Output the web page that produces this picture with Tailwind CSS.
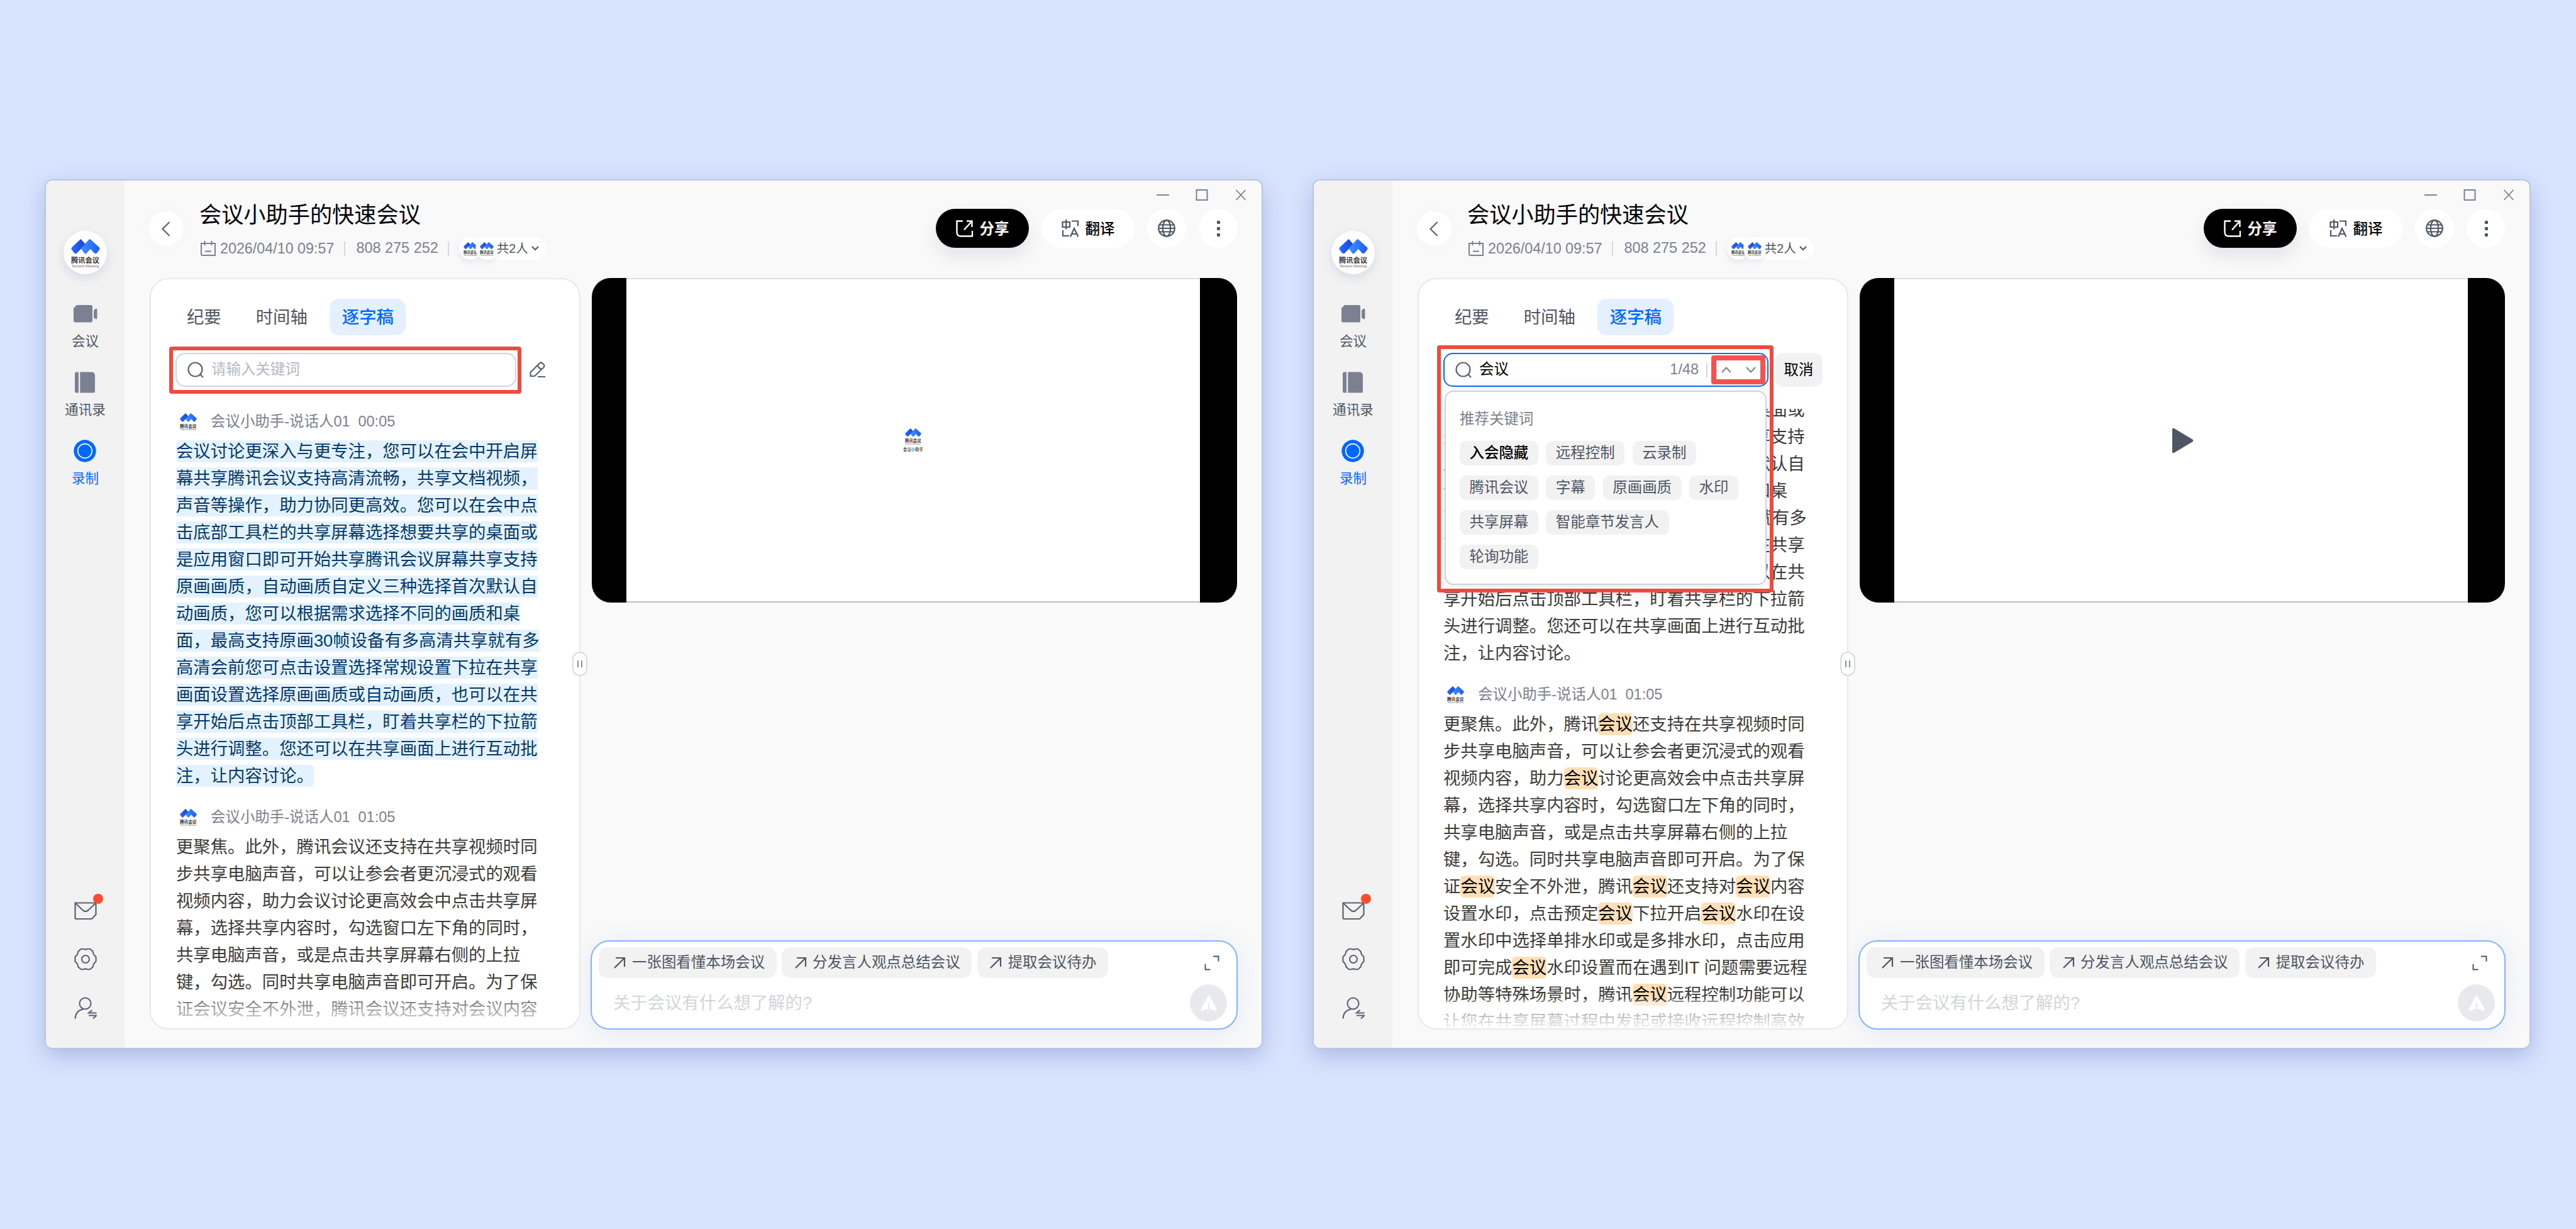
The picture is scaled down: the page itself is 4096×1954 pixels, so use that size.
<!DOCTYPE html>
<html lang="zh-CN">
  <head>
    <meta charset="UTF-8" />
    <meta name="viewport" content="width=device-width, initial-scale=1.0" />
    <title>腾讯会议 - 逐字稿搜索</title>
    <script src="https://cdn.jsdelivr.net/npm/@tailwindcss/browser@4"></script>
  </head>
  <body
    class="w-[4096px] h-[1954px] overflow-hidden bg-[#d8e3fe] font-['Liberation_Sans','Noto_Sans_CJK_SC',sans-serif] text-[23.46px] text-[#4e5666]"
  >
    <!-- Shared icons -->
    <svg class="absolute size-0">
      <defs>
        <linearGradient id="logo-a" x1="0" x2="1"><stop offset="0" stop-color="#2a6cf8" /><stop offset="1" stop-color="#1a3fe0" /></linearGradient>
        <linearGradient id="logo-b" x1="0" x2="1"><stop offset="0" stop-color="#3a92ff" /><stop offset="1" stop-color="#1f5bf5" /></linearGradient>
      </defs>
      <symbol id="logo" viewBox="0 0 54 54">
        <path d="M17.500 0.500L2 15Q-1 18 2 21L6 26Q8 28.500 11 26L27 10L20 2Q18.500 -0.500 17.500 0.500Z" fill="url(#logo-a)" />
        <path d="M36 0.500Q34.500 -0.500 33 1.500L18 17.500L24.500 26Q27 29 29.500 26L36 18.500L43 26Q46 28.500 48 26L52 21Q55 18 52 15Z" fill="url(#logo-b)" />
        <text x="0" y="45" font-size="13.200" font-weight="700" fill="#333" textLength="53" lengthAdjust="spacingAndGlyphs">腾讯会议</text>
        <text x="1" y="53" font-size="6.500" fill="#666" textLength="51" lengthAdjust="spacingAndGlyphs">Tencent Meeting</text>
      </symbol>
      <symbol id="search" viewBox="0 0 26 26">
        <g fill="none" stroke="currentColor" stroke-width="2.200"><circle cx="12.500" cy="12.500" r="11" /><path d="M19.500 19.500L25 25" /></g>
      </symbol>
      <symbol id="arrow" viewBox="0 0 19 19">
        <g fill="none" stroke="#4e5666" stroke-width="2.200"><path d="M1 18L17 2M3 2H17V16" /></g>
      </symbol>
    </svg>

    <main id="desktop" class="flex gap-[83px] pt-[287px] pl-[73px]"></main>

    <!-- Meeting window -->
    <template id="window-template">
      <section class="flex w-[1933px] h-[1379px] rounded-[10px] overflow-hidden bg-[#f9f9f9] shadow-[0_0_0_2px_#b9c5e2,0_12px_36px_rgba(60,84,160,0.3)]">
        <!-- Sidebar -->
        <aside class="w-[125px] shrink-0 bg-[#f2f2f2] flex flex-col items-center pt-[80px] pb-[45px] text-[21.6px]">
          <div class="size-[69px] shrink-0 rounded-full bg-white flex items-center justify-center shadow-[0_6px_16px_rgba(90,110,170,0.18)]">
            <svg class="w-[46px] h-[46px] mt-[2px]"><use href="#logo" /></svg>
          </div>
          <nav class="mt-[45px] flex flex-col gap-[34px]">
            <div class="flex flex-col items-center gap-[13px]">
              <svg class="size-9 overflow-visible" viewBox="0 0 36 36" fill="#7b8191"><path d="M5 4H27.500Q30 4 30 7V29Q30 31.500 27.500 31.500H3Q0 31.500 0 29V9Z" /><path d="M32 12.500L35.500 9.500Q37.500 9.500 37.500 11V25Q37.500 26.500 35.500 26.500L32 24Z" /></svg>
              <span class="leading-[26px]">会议</span>
            </div>
            <div class="flex flex-col items-center gap-[13px]">
              <svg class="size-9" viewBox="0 0 36 36" fill="#7b8191"><path d="M4.500 1.500H8V34.500H4.500Q2 34.500 2 32V4Q2 1.500 4.500 1.500ZM10.300 1.500H29Q34 2 34 7V32Q34 34.500 31.500 34.500H10.300Z" /></svg>
              <span class="leading-[26px]">通讯录</span>
            </div>
            <div class="flex flex-col items-center gap-[13px] text-[#0a6cff]">
              <svg class="size-9" viewBox="0 0 36 36"><circle cx="18" cy="18" r="17.700" fill="#0068ff" /><circle cx="18" cy="18" r="11.300" fill="none" stroke="#fff" stroke-width="1.700" /></svg>
              <span class="leading-[26px]">录制</span>
            </div>
          </nav>
          <div class="mt-auto flex flex-col gap-[41.7px]">
            <div class="relative size-9">
              <svg class="size-9" viewBox="0 0 36 36" fill="none" stroke="#5b6271" stroke-width="2.200"><path d="M1.500 5.500H34.500V24L28 31H3.500Q1.500 31 1.500 29ZM2 6L14 17.500Q18 20.500 22 17.500L34 6" /></svg>
              <span class="absolute -top-[9px] -right-[10px] size-4 rounded-full bg-[#fc4c2f]"></span>
            </div>
            <svg class="size-9" viewBox="0 0 36 36" fill="none" stroke="#5b6271" stroke-width="2.100" stroke-linejoin="round"><path d="M34.600 14.500V21.500L31 25.500L29.400 30.600L25 34.200H22L18 33.400L14 34.200H11L6.600 30.600L5 25.500L1.400 21.500V14.500L5 10.500L6.600 5.400L11 1.800H14L18 2.600L22 1.800H25L29.400 5.400L31 10.500Z" /><circle cx="18" cy="18" r="6" /></svg>
            <svg class="size-9" viewBox="0 0 36 36" fill="none" stroke="#5b6271" stroke-width="2.100"><circle cx="17.500" cy="10.500" r="9" /><path d="M14 19.500Q2 22 1.500 34.500M35.500 25.500H23L28.500 21M23 29.500H35.500L30 34.500" /></svg>
          </div>
        </aside>

        <div class="flex-1 min-w-0 flex flex-col">
          <!-- Header -->
          <header class="h-[155px] flex">
            <div class="mt-[49px] ml-[39px] size-[55px] rounded-full bg-white flex items-center justify-center shadow-[0_0_40px_rgba(0,0,0,0.02)]">
              <svg class="w-[14px] h-6 -ml-[2px]" viewBox="0 0 14 24" fill="none" stroke="#5b6271" stroke-width="2.200"><path d="M12.500 1L1.500 12L12.500 23" /></svg>
            </div>
            <div class="ml-[25px] pt-[30px]">
              <h1 class="text-[35.2px] leading-[50px] text-black">会议小助手的快速会议</h1>
              <div class="mt-[10px] h-9 flex items-center text-[#7b8191]">
                <svg class="w-6 h-6 ml-[2px]" viewBox="0 0 24 24" fill="none" stroke="currentColor" stroke-width="2"><path d="M1 4H23V23H3Q1 23 1 21ZM6.500 0V7M17.500 0V7M7 16.500H17" /></svg>
                <span class="ml-[7px] text-[23.3px]">2026/04/10 09:57</span>
                <span class="ml-[16px] h-[23px] w-[2px] bg-[#d5d8de]"></span>
                <span class="ml-[17px]">808 275 252</span>
                <span class="ml-[15px] h-[23px] w-[2px] bg-[#d5d8de]"></span>
                <div class="ml-[16px] flex items-center rounded-full bg-white h-9 w-[138px] text-[#4e5666]">
                  <span class="size-9 rounded-full bg-white flex items-center justify-center shadow-[0_4px_10px_rgba(90,110,170,0.14)]"><svg class="size-[22px] mt-[2px]"><use href="#logo" /></svg></span>
                  <span class="-ml-[10px] size-9 rounded-full bg-white flex items-center justify-center shadow-[0_4px_10px_rgba(90,110,170,0.12)]"><svg class="size-[22px] mt-[2px]"><use href="#logo" /></svg></span>
                  <span class="-ml-[2px] text-[19.5px] leading-[38px] z-10 whitespace-nowrap">共2人</span>
                  <svg class="ml-[5px] w-[12px] h-[8px]" viewBox="0 0 12 8" fill="none" stroke="currentColor" stroke-width="2"><path d="M1 1L6 6L11 1" /></svg>
                </div>
              </div>
            </div>
            <div class="ml-auto flex flex-col items-end">
              <div class="h-[45px] pr-[23px] flex items-center gap-[42px] text-[#7b8191]">
                <svg class="size-5" viewBox="0 0 20 20" stroke="currentColor" stroke-width="2"><path d="M-1 10H21" /></svg>
                <svg class="size-5" viewBox="0 0 20 20" fill="none" stroke="currentColor" stroke-width="2"><rect x="1.500" y="2" width="17" height="16" /></svg>
                <svg class="size-5" viewBox="0 0 20 20" stroke="currentColor" stroke-width="1.800"><path d="M2.500 2L17.500 18M17.500 2L2.500 18" /></svg>
              </div>
              <div class="pr-[38px] flex items-center gap-5">
                <div class="h-[62px] w-[148px] rounded-full bg-black text-white font-bold flex items-center justify-center gap-[10px] shadow-[0_14px_26px_rgba(80,80,140,0.12)]">
                  <svg class="size-[28px]" viewBox="0 0 28 28" fill="none" stroke="currentColor" stroke-width="2.400"><path d="M11 2.500H1.500V20Q1.500 26.500 8 26.500H26V18M17 2.500H25.500V12M25.500 2.500L13 16.500" /></svg>
                  <span class="pt-[3px]">分享</span>
                </div>
                <div class="h-[62px] w-[148px] rounded-full bg-white text-black flex items-center justify-center gap-[10px]">
                  <svg class="size-[28px]" viewBox="0 0 28 28" fill="none" stroke="#4e5666" stroke-width="2.200"><path d="M1.500 4H13V12H1.500ZM7.200 0V15.500M16 2.500H26V10.500M2 17V26H12M14 27.500L20 14L26.500 27.500M16 23H24.500" /></svg>
                  <span class="pt-[3px] font-medium">翻译</span>
                </div>
                <div class="size-[62px] rounded-full bg-white flex items-center justify-center">
                  <svg class="size-[28px]" viewBox="0 0 28 28" fill="none" stroke="#4e5666" stroke-width="2.200"><circle cx="14" cy="14" r="12.800" /><ellipse cx="14" cy="14" rx="6.200" ry="12.800" /><path d="M3 8.500H25M1 14H27M3 19.500H25" /></svg>
                </div>
                <div class="size-[62px] rounded-full bg-white flex flex-col items-center justify-center gap-[5px]">
                  <i class="size-[5px] rounded-[1px] bg-[#4e5666]"></i>
                  <i class="size-[5px] rounded-[1px] bg-[#4e5666]"></i>
                  <i class="size-[5px] rounded-[1px] bg-[#4e5666]"></i>
                </div>
              </div>
            </div>
          </header>

          <div class="flex gap-[16px] pl-[40px]">
            <!-- Transcript card -->
            <section class="relative w-[685px] h-[1195px] rounded-[30px] border-2 border-[#e8e8e8] bg-white pt-[31px]">
              <div class="flex gap-[16px] pl-[37.5px] text-[27.37px] leading-[56px]">
                <span class="px-[19.5px] pt-[2px]">纪要</span>
                <span class="px-[19.5px] pt-[2px]">时间轴</span>
                <span class="px-[19.5px] pt-[2px] rounded-[15px] bg-[#e4f0ff] text-[#0068ff] font-medium">逐字稿</span>
              </div>
              <div data-slot="panel"></div>
              <div class="absolute inset-x-0 bottom-0 h-[46px] rounded-b-[28px] bg-linear-to-b from-white/30 to-white/95"></div>
              <!-- Drag handle -->
              <div class="absolute -right-[13px] top-[592px] w-[24px] h-[39px] rounded-full border-2 border-[#d9dbe2] bg-white flex items-center justify-center gap-[4px]">
                <i class="w-[2px] h-[11px] bg-[#8a90a0]"></i>
                <i class="w-[2px] h-[11px] bg-[#8a90a0]"></i>
              </div>
            </section>

            <div class="flex flex-col justify-between">
              <!-- Video -->
              <div class="ml-[2px] w-[1026px] h-[516px] rounded-[30px] overflow-hidden bg-black pl-[55px] pr-[59px]">
                <div class="h-full bg-white border-t-2 border-b-2 border-t-[#e0e0e0] border-b-[#bdbdbd] flex items-center justify-center" data-slot="video"></div>
              </div>
              <!-- Ask box -->
              <div class="w-[1029px] h-[142px] rounded-[30px] border-2 border-[#82b3ff] bg-white pt-[9px] pl-[11px] pr-[15px] shadow-[0_6px_40px_rgba(70,120,220,0.12)]">
                <div class="flex items-center gap-[8.5px] leading-[49px] whitespace-nowrap">
                  <span class="flex items-center gap-[10px] pl-[24px] pr-[18.5px] rounded-[14px] bg-[#f2f2f2]"><svg class="size-[19px]"><use href="#arrow" /></svg>一张图看懂本场会议</span>
                  <span class="flex items-center gap-[9.5px] pl-[20.5px] pr-[18.5px] rounded-[14px] bg-[#f2f2f2]"><svg class="size-[19px]"><use href="#arrow" /></svg>分发言人观点总结会议</span>
                  <span class="flex items-center gap-[9.5px] pl-[20.5px] pr-[19px] rounded-[14px] bg-[#f2f2f2]"><svg class="size-[19px]"><use href="#arrow" /></svg>提取会议待办</span>
                  <svg class="ml-auto mr-[12px] size-[24px]" viewBox="0 0 24 24" fill="none" stroke="#4e5666" stroke-width="2"><path d="M14 1.500H22.500V9.500M1.500 14V22.500H9.500" /></svg>
                </div>
                <div class="mt-[10px] flex items-center pl-[23px]">
                  <span class="text-[27.37px] text-[#d2d5dc]">关于会议有什么想了解的?</span>
                  <span class="ml-auto size-[59px] rounded-full bg-[#e8e9ed] flex items-center justify-center">
                    <svg class="w-[26px] h-[24px]" viewBox="0 0 26 24" fill="#fff"><path d="M11.500 1Q13 -1 14.500 1L25.500 21.500Q26 24.500 23 24L14 21V12H12V21L3 24Q0 24.500 0.500 21.500Z" /></svg>
                  </span>
                </div>
              </div>
            </div>
          </div>
        </div>
      </section>
    </template>

    <!-- Left window: empty search -->
    <template id="panel-browse">
      <div class="relative mt-[28px] ml-[39px] h-[54px] w-[542px] rounded-[15px] border-2 border-[#d0d3da] flex items-center pl-[17px]">
        <svg class="size-[26px] text-[#5b6271]"><use href="#search" /></svg>
        <span class="ml-[12px] text-[#b4b9c6]">请输入关键词</span>
        <svg class="absolute left-[560px] top-[12px] size-[26px]" viewBox="0 0 26 26" fill="none" stroke="#5b6271" stroke-width="2.200"><path d="M17 2.500Q19 0.500 21.500 2.500L23.500 4.500Q25.500 6.500 23.500 9L9 23H2.500V17ZM14 6Q16 11 20.500 12M14 24H26" /></svg>
        <div class="absolute -left-[12px] -top-[12px] w-[560px] h-[75px] rounded-[4px] border-6 border-[#f04a3e]"></div>
      </div>
      <div class="mt-[30px] ml-[40px] h-[984px] overflow-hidden whitespace-nowrap">
        <div class="h-12 pt-[3px] flex items-center text-[#7b8191]">
          <svg class="ml-[6px] size-[27px]"><use href="#logo" /></svg>
          <span class="ml-[22px] whitespace-pre">会议小助手-说话人01  00:05</span>
        </div>
        <p class="mt-[3px] text-[27.37px] leading-[43px] text-[#053a6c]">
          <span class="rounded-[6px] bg-[#e4f2ff] py-[1.7px]">会议讨论更深入与更专注，您可以在会中开启屏<br />幕共享腾讯会议支持高清流畅，共享文档视频，<br />声音等操作，助力协同更高效。您可以在会中点<br />击底部工具栏的共享屏幕选择想要共享的桌面或<br />是应用窗口即可开始共享腾讯会议屏幕共享支持<br />原画画质，自动画质自定义三种选择首次默认自<br />动画质，您可以根据需求选择不同的画质和桌<br />面，最高支持原画30帧设备有多高清共享就有多<br />高清会前您可点击设置选择常规设置下拉在共享<br />画面设置选择原画画质或自动画质，也可以在共<br />享开始后点击顶部工具栏，盯着共享栏的下拉箭<br />头进行调整。您还可以在共享画面上进行互动批<br />注，让内容讨论。</span>
        </p>
        <div class="mt-[19px] h-12 pt-[3px] flex items-center text-[#7b8191]">
          <svg class="ml-[6px] size-[27px]"><use href="#logo" /></svg>
          <span class="ml-[22px] whitespace-pre">会议小助手-说话人01  01:05</span>
        </div>
        <p class="mt-[3px] text-[27.37px] leading-[43px] text-[#3c3c3c]">
          更聚焦。此外，腾讯会议还支持在共享视频时同<br />步共享电脑声音，可以让参会者更沉浸式的观看<br />视频内容，助力会议讨论更高效会中点击共享屏<br />幕，选择共享内容时，勾选窗口左下角的同时，<br />共享电脑声音，或是点击共享屏幕右侧的上拉<br />键，勾选。同时共享电脑声音即可开启。为了保<br />证会议安全不外泄，腾讯会议还支持对会议内容
        </p>
      </div>
    </template>

    <template id="video-logo">
      <div class="flex flex-col items-center">
        <svg class="size-[26px]"><use href="#logo" /></svg>
        <span class="mt-[4px] text-[6.4px] leading-[8px] text-black">会议小助手</span>
      </div>
    </template>

    <!-- Right window: keyword search with suggestions -->
    <template id="panel-search">
      <div class="relative mt-[28px] ml-[39px] flex gap-[10px]">
        <div class="h-[54px] w-[517px] rounded-[15px] border-2 border-[#0a6cff] flex items-center pl-[17px]">
          <svg class="size-[26px] text-[#5b6271]"><use href="#search" /></svg>
          <span class="ml-[12px] text-black">会议</span>
          <span class="ml-auto text-[#7b8191]">1/48</span>
          <span class="ml-[12px] h-[23px] w-[2px] bg-[#d5d8de]"></span>
          <div class="ml-[6px] mr-[3px] w-[86px] h-[46px] rounded-[4px] border-8 border-[#fa5150] bg-white flex items-center justify-center gap-[23px] text-[#7b8191]">
            <svg class="w-4 h-[10px]" viewBox="0 0 16 10" fill="none" stroke="currentColor" stroke-width="2"><path d="M1 9L8 1.500L15 9" /></svg>
            <svg class="w-4 h-[10px]" viewBox="0 0 16 10" fill="none" stroke="currentColor" stroke-width="2"><path d="M1 1L8 8.500L15 1" /></svg>
          </div>
        </div>
        <div class="w-[76px] h-[54px] rounded-[14px] bg-[#f2f2f2] text-black leading-[54px] text-center">取消</div>
        <!-- Suggestion dropdown -->
        <div class="absolute left-[2px] top-[60px] z-10 w-[512px] h-[309px] rounded-[14px] border-2 border-[#d0d3da] bg-white px-[22px] pt-[29px] shadow-[0_8px_40px_rgba(0,0,0,0.08)]">
          <p class="leading-[28px] text-[#7b8191]">推荐关键词</p>
          <div class="mt-[21px] flex flex-wrap gap-x-[12.5px] gap-y-[16px] leading-[39px]">
            <span class="px-[15.5px] rounded-[10px] bg-[#f2f2f2] text-black font-medium">入会隐藏</span>
            <span class="px-[15.5px] rounded-[10px] bg-[#f2f2f2]">远程控制</span>
            <span class="px-[15.5px] rounded-[10px] bg-[#f2f2f2]">云录制</span>
            <span class="px-[15.5px] rounded-[10px] bg-[#f2f2f2]">腾讯会议</span>
            <span class="px-[15.5px] rounded-[10px] bg-[#f2f2f2]">字幕</span>
            <span class="px-[15.5px] rounded-[10px] bg-[#f2f2f2]">原画画质</span>
            <span class="px-[15.5px] rounded-[10px] bg-[#f2f2f2]">水印</span>
            <span class="px-[15.5px] rounded-[10px] bg-[#f2f2f2]">共享屏幕</span>
            <span class="px-[15.5px] rounded-[10px] bg-[#f2f2f2]">智能章节发言人</span>
            <span class="px-[15.5px] rounded-[10px] bg-[#f2f2f2]">轮询功能</span>
          </div>
        </div>
        <div class="absolute -left-[10px] -top-[12px] z-20 w-[535px] h-[393px] rounded-[4px] border-6 border-[#f04a3e]"></div>
      </div>
      <div class="mt-[35px] ml-[39px] h-[983px] overflow-hidden whitespace-nowrap">
        <p class="-mt-[20px] text-[27.37px] leading-[43px] text-[#3c3c3c]">
          击底部工具栏的共享屏幕选择想要共享的桌面或<br />是应用窗口即可开始共享腾讯会议屏幕共享支持<br />原画画质，自动画质自定义三种选择首次默认自<br />动画质，您可以根据需求选择不同的画质和桌<br />面，最高支持原画30帧设备有多高清共享就有多<br />高清会前您可点击设置选择常规设置下拉在共享<br />画面设置选择原画画质或自动画质，也可以在共<br />享开始后点击顶部工具栏，盯着共享栏的下拉箭<br />头进行调整。您还可以在共享画面上进行互动批<br />注，让内容讨论。
        </p>
        <div class="mt-[19px] h-12 pt-[3px] flex items-center text-[#7b8191]">
          <svg class="ml-[6px] size-[27px]"><use href="#logo" /></svg>
          <span class="ml-[22px] whitespace-pre">会议小助手-说话人01  01:05</span>
        </div>
        <p data-keyword="会议" class="mt-[3px] text-[27.37px] leading-[43px] text-[#3c3c3c]">
          更聚焦。此外，腾讯会议还支持在共享视频时同<br />步共享电脑声音，可以让参会者更沉浸式的观看<br />视频内容，助力会议讨论更高效会中点击共享屏<br />幕，选择共享内容时，勾选窗口左下角的同时，<br />共享电脑声音，或是点击共享屏幕右侧的上拉<br />键，勾选。同时共享电脑声音即可开启。为了保<br />证会议安全不外泄，腾讯会议还支持对会议内容<br />设置水印，点击预定会议下拉开启会议水印在设<br />置水印中选择单排水印或是多排水印，点击应用<br />即可完成会议水印设置而在遇到IT 问题需要远程<br />协助等特殊场景时，腾讯会议远程控制功能可以<br />让您在共享屏幕过程中发起或接收远程控制高效
        </p>
      </div>
    </template>

    <template id="video-play">
      <svg class="ml-[5px] w-[35px] h-[41px]" viewBox="0 0 36 42" fill="#4e5666"><path d="M1 3Q1 0 4 1L34 19Q36.500 21 34 23L4 41Q1 42 1 39Z" /></svg>
    </template>

    <script>
      const desktop = document.getElementById("desktop");
      const cloneTemplate = (id) =>
        document.getElementById(id).content.cloneNode(true);

      // One window = shell + transcript panel + whatever the player shows
      const addWindow = (panelId, videoId) => {
        const win = cloneTemplate("window-template");
        win.querySelector('[data-slot="panel"]').replaceWith(cloneTemplate(panelId));
        win.querySelector('[data-slot="video"]').appendChild(cloneTemplate(videoId));
        desktop.appendChild(win);
      };

      const highlightKeyword = (el) => {
        el.innerHTML = el.innerHTML.replaceAll(
          el.dataset.keyword,
          `<mark class="rounded-[6px] bg-[#ffdfb6] py-[1.7px] text-black">${el.dataset.keyword}</mark>`
        );
      };

      addWindow("panel-browse", "video-logo");
      addWindow("panel-search", "video-play");
      document.querySelectorAll("[data-keyword]").forEach(highlightKeyword);
    </script>
  </body>
</html>
